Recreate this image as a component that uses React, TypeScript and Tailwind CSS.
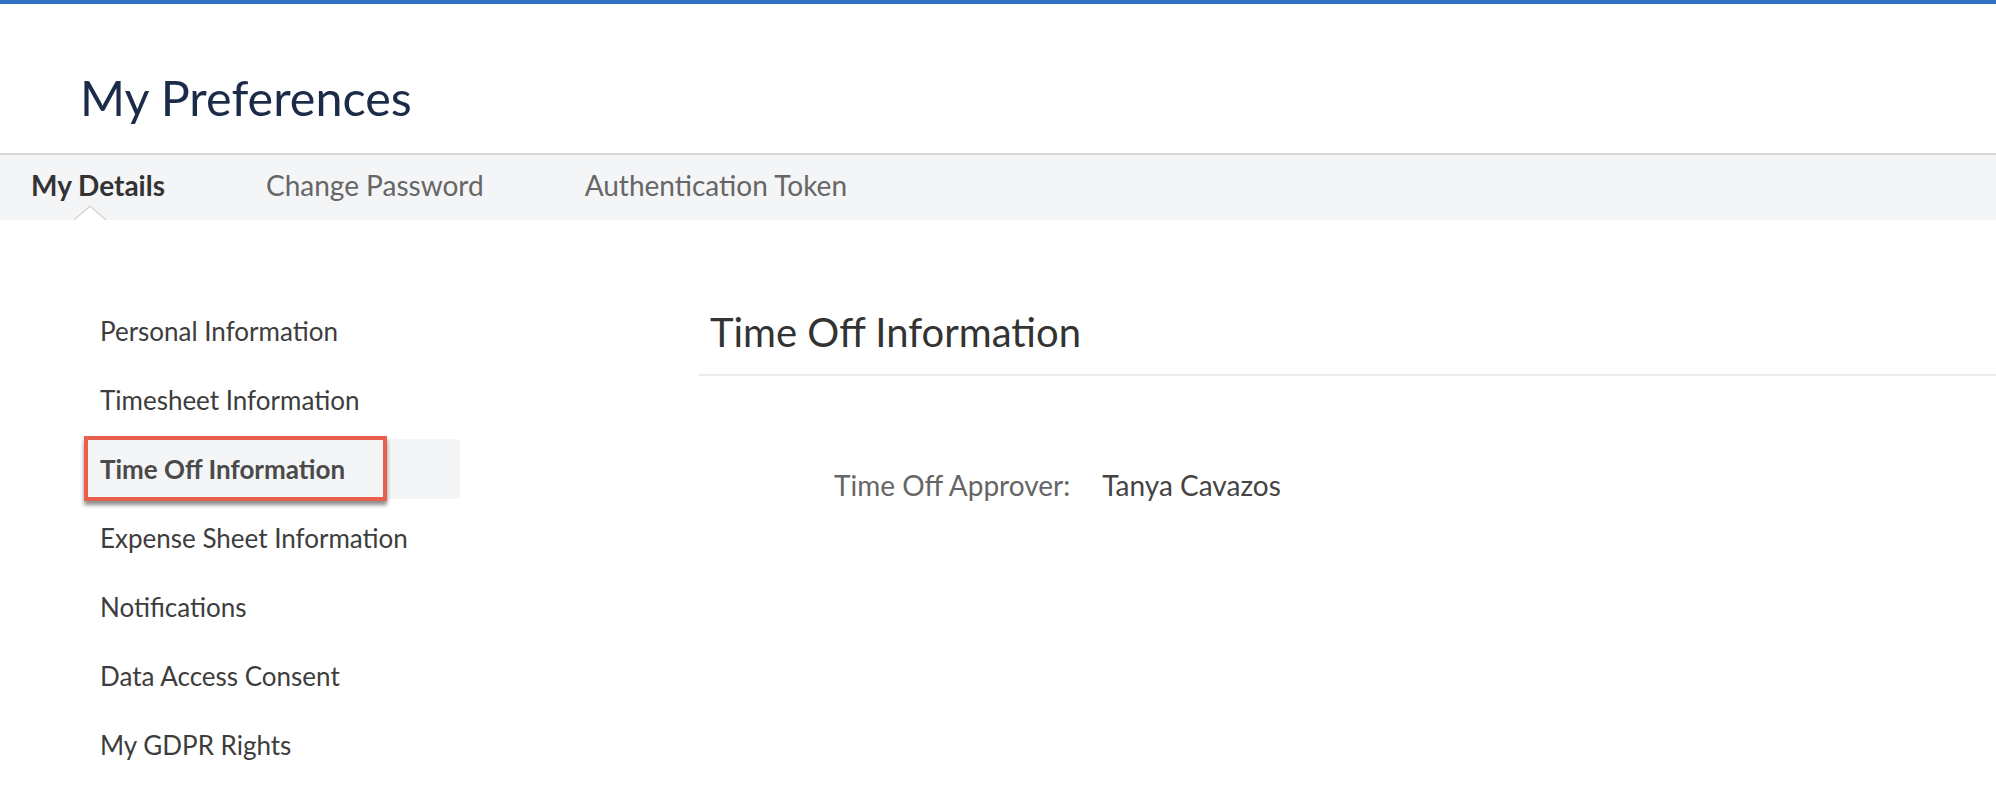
const sideItems = [
  "Personal Information",
  "Timesheet Information",
  "Time Off Information",
  "Expense Sheet Information",
  "Notifications",
  "Data Access Consent",
  "My GDPR Rights",
]

const tabs = ["My Details", "Change Password", "Authentication Token"]

export default function App() {
  return (
    <div className="min-h-[792px] w-full bg-white font-['Lato',_'Open_Sans',_sans-serif]">
      <div className="h-[4px] bg-[#2f6fc4]" />

      <header className="pl-[80px] pt-[64px] pb-[27px]">
        <h1 className="text-[48.5px] leading-[58px] text-[#1b2b48]">My Preferences</h1>
      </header>

      <nav className="relative flex h-[67px] items-center gap-[101px] border-t-2 border-[#d5d6d8] bg-[#f4f5f7] pb-[5px] pl-[31px]">
        {tabs.map((t, i) => (
          <span
            key={t}
            className={
              i === 0
                ? "text-[28px] font-bold text-[#333333]"
                : "text-[28px] text-[#666666]"
            }
          >
            {t}
          </span>
        ))}
        <svg
          className="absolute bottom-0 left-[74px]"
          width="32"
          height="15"
          viewBox="0 0 32 15"
        >
          <polygon points="0,15 16,1 32,15" fill="#ffffff" />
          <polyline points="0,15 16,1 32,15" fill="none" stroke="#cfcfcf" strokeWidth="1.2" />
        </svg>
      </nav>

      <div className="flex pt-[81px]">
        <aside className="ml-[85px] w-[375px] shrink-0">
          {sideItems.map((s) => {
            const active = s === "Time Off Information"
            return (
              <div
                key={s}
                className={
                  active
                    ? "relative mb-[9px] flex h-[60px] items-center rounded-[5px] bg-[#f4f5f7] pl-[15px]"
                    : "mb-[9px] flex h-[60px] items-center pl-[15px]"
                }
              >
                <span
                  className={
                    active
                      ? "text-[26px] font-bold text-[#4a4a4a]"
                      : "text-[26px] text-[#3d3d3d]"
                  }
                >
                  {s}
                </span>
                {active && (
                  <div className="absolute -left-[1px] -top-[3px] h-[65px] w-[303px] border-[4px] border-[#e8604c] shadow-[0_4px_4px_rgba(0,0,0,0.45)]" />
                )}
              </div>
            )
          })}
        </aside>

        <main className="ml-[239px] flex-1">
          <div className="border-b-2 border-[#ececec] pb-[18px] pl-[11px] pt-[7px]">
            <h2 className="text-[40px] leading-[48px] text-[#333333]">Time Off Information</h2>
          </div>
          <div className="flex items-center pl-[135px] pt-[88px] text-[28px] leading-[42px]">
            <span className="text-[#666666]">Time Off Approver:</span>
            <span className="ml-[32px] text-[#444444]">Tanya Cavazos</span>
          </div>
        </main>
      </div>
    </div>
  )
}
